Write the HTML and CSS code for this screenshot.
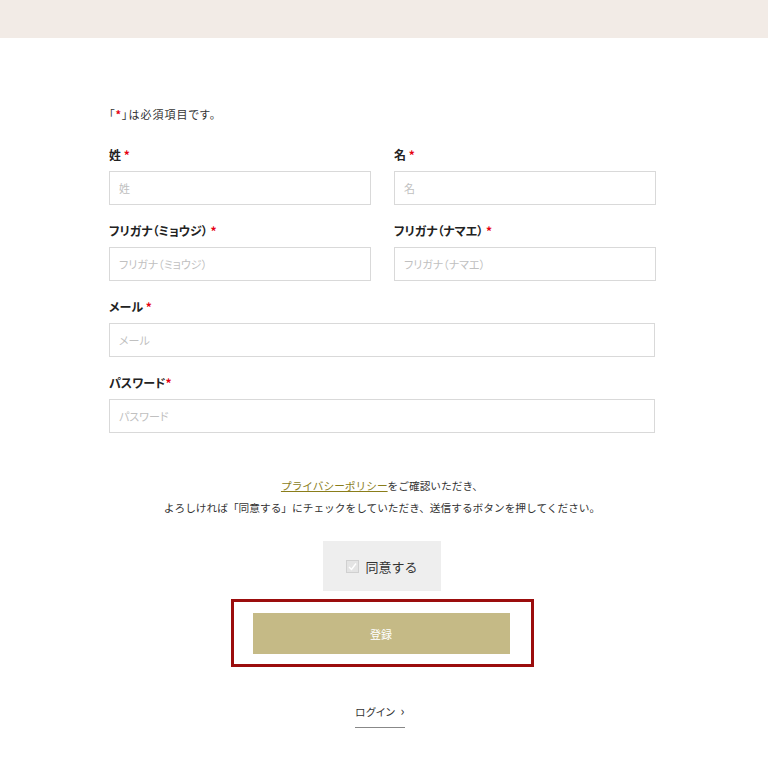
FILE: index.html
```html
<!DOCTYPE html>
<html lang="ja">
<head>
<meta charset="utf-8">
<link rel="stylesheet" href="styles.css">
</head>
<body>
<header class="topbar"></header>
<main class="form-wrap">
  <p class="note">「<span class="req">*</span>」は必須項目です。</p>
  <div class="row two">
    <div class="field">
      <label class="label">姓 <span class="req">*</span></label>
      <div class="input">姓</div>
    </div>
    <div class="field">
      <label class="label">名 <span class="req">*</span></label>
      <div class="input">名</div>
    </div>
  </div>
  <div class="row two">
    <div class="field">
      <label class="label">フリガナ（ミョウジ） <span class="req">*</span></label>
      <div class="input">フリガナ（ミョウジ）</div>
    </div>
    <div class="field">
      <label class="label">フリガナ（ナマエ） <span class="req">*</span></label>
      <div class="input">フリガナ（ナマエ）</div>
    </div>
  </div>
  <div class="row">
    <div class="field">
      <label class="label">メール <span class="req">*</span></label>
      <div class="input">メール</div>
    </div>
  </div>
  <div class="row">
    <div class="field">
      <label class="label">パスワード<span class="req">*</span></label>
      <div class="input">パスワード</div>
    </div>
  </div>
  <p class="privacy"><a class="plink" href="#">プライバシーポリシー</a>をご確認いただき、<br>よろしければ「同意する」にチェックをしていただき、送信するボタンを押してください。</p>
  <div class="agree-wrap">
    <div class="agree">
      <span class="cbox"><svg width="11" height="11" viewBox="0 0 11 11"><path d="M2 6 L4.5 8.5 L9 2.5" fill="none" stroke="#fff" stroke-width="1.4"/></svg></span>
      <span>同意する</span>
    </div>
  </div>
  <div class="submit-wrap">
    <div class="highlight">
      <button class="submit">登録</button>
    </div>
  </div>
  <div class="login-wrap">
    <a class="login" href="#">ログイン <span class="chev">&#x203A;</span></a>
  </div>
</main>
</body>
</html>
```
FILE: styles.css
```css
* { box-sizing: border-box; }
body {
  margin: 0;
  background: #fff;
  font-family: "Noto Sans CJK JP", "Noto Sans", sans-serif;
  color: #333;
}
.topbar {
  height: 38px;
  background: #f2ebe6;
}
.form-wrap {
  width: 546px;
  margin-left: 109px;
  padding-top: 68px;
}
.note {
  margin: 0 0 25px;
  font-size: 11px;
  line-height: 16px;
  color: #333;
  letter-spacing: 1px;
  font-feature-settings: "palt";
}
.req {
  color: #e60012;
  font-weight: bold;
}
.row {
  display: flex;
  gap: 23px;
  margin-bottom: 18px;
}
.row.two .field { width: 262px; }
.row .field { flex: none; width: 546px; }
.label {
  display: block;
  font-size: 12px;
  font-weight: bold;
  line-height: 16px;
  color: #222;
  margin-bottom: 8px;
  font-feature-settings: "palt";
}
.input {
  height: 34px;
  border: 1px solid #d9d9d9;
  background: #fff;
  padding-left: 9px;
  font-size: 11px;
  line-height: 32px;
  color: #c0c0c0;
  font-feature-settings: "palt";
}
.privacy {
  margin: 42px 0 0;
  text-align: center;
  font-size: 10.7px;
  line-height: 22px;
  color: #333;
}
.plink {
  color: #8a7d1a;
  text-decoration: underline;
}
.agree-wrap {
  display: flex;
  justify-content: center;
  margin-top: 22px;
}
.agree {
  width: 118px;
  height: 50px;
  background: #eeeeee;
  display: flex;
  align-items: center;
  justify-content: center;
  gap: 6px;
  font-size: 13px;
  color: #333;
}
.cbox {
  width: 13px;
  height: 13px;
  border: 1px solid #d0d0d0;
  background: #e4e4e4;
  display: flex;
  align-items: center;
  justify-content: center;
}
.submit-wrap {
  display: flex;
  justify-content: center;
  margin-top: 8px;
}
.highlight {
  width: 303px;
  height: 68px;
  border: 3px solid #9b0d0d;
  padding: 11px 21px 10px 19px;
}
.submit {
  display: block;
  width: 257px;
  height: 41px;
  border: 0;
  background: #c5ba86;
  color: #fff;
  font-family: inherit;
  font-size: 11px;
}
.login-wrap {
  display: flex;
  justify-content: center;
  margin-top: 36px;
}
.login {
  display: inline-block;
  width: 50px;
  white-space: nowrap;
  text-align: center;
  font-size: 10.5px;
  line-height: 16px;
  color: #333;
  text-decoration: none;
  padding-bottom: 7px;
  border-bottom: 1px solid #888;
  margin-left: -4px;
  letter-spacing: 0.5px;
  font-feature-settings: "palt";
}
.chev { font-size: 13px; margin-left: 2px; }
```
